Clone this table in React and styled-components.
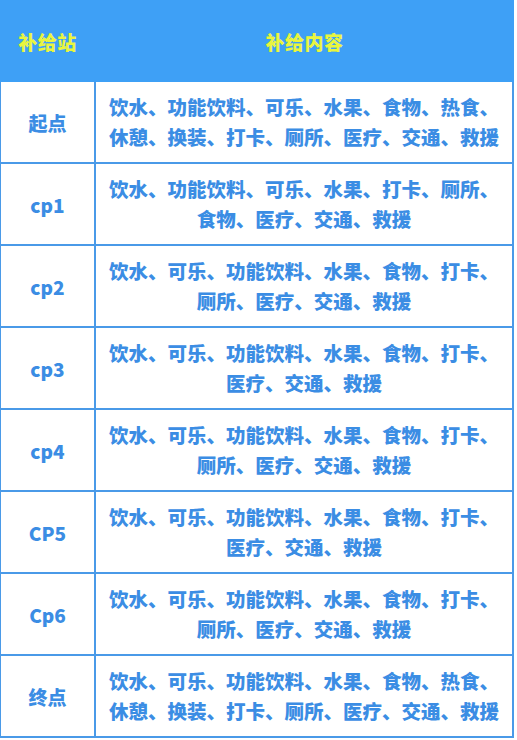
import React from 'react';
import styled, { createGlobalStyle } from 'styled-components';

const GlobalStyle = createGlobalStyle`
  html, body {
    margin: 0;
    padding: 0;
    background: #ffffff;
  }
  body {
    font-family: "Noto Sans CJK SC", "Noto Sans", sans-serif;
  }
`;

const Table = styled.div`
  width: 514px;
  display: grid;
  grid-template-columns: 93px 1fr;
  grid-auto-rows: 80px;
  gap: 2px;
  padding: 0 2px 2px 1px;
  box-sizing: border-box;
  background: #4a9ae8;
`;

const Header = styled.div`
  grid-column: 1 / -1;
  height: 82px;
  margin: 0 -2px 0 -1px;
  display: grid;
  grid-template-columns: 95px 1fr;
  align-items: center;
  background: #3ea0f6;
`;

const HeadCell = styled.div`
  text-align: center;
  color: #e9f53e;
  font-size: 19px;
  font-weight: 900;
  letter-spacing: 0.5px;
`;

const LabelCell = styled.div`
  display: flex;
  align-items: center;
  justify-content: center;
  background: #ffffff;
  color: #3b8de4;
  font-family: "Noto Sans CJK SC", "DejaVu Sans", sans-serif;
  font-size: 19px;
  font-weight: 900;
`;

const ContentCell = styled.div`
  display: flex;
  flex-direction: column;
  align-items: center;
  justify-content: center;
  background: #ffffff;
  color: #3b8de4;
  font-size: 19.5px;
  font-weight: 900;
  line-height: 30px;
  white-space: nowrap;
`;

const rows = [
  { name: '起点', lines: ['饮水、功能饮料、可乐、水果、食物、热食、', '休憩、换装、打卡、厕所、医疗、交通、救援'] },
  { name: 'cp1', lines: ['饮水、功能饮料、可乐、水果、打卡、厕所、', '食物、医疗、交通、救援'] },
  { name: 'cp2', lines: ['饮水、可乐、功能饮料、水果、食物、打卡、', '厕所、医疗、交通、救援'] },
  { name: 'cp3', lines: ['饮水、可乐、功能饮料、水果、食物、打卡、', '医疗、交通、救援'] },
  { name: 'cp4', lines: ['饮水、可乐、功能饮料、水果、食物、打卡、', '厕所、医疗、交通、救援'] },
  { name: 'CP5', lines: ['饮水、可乐、功能饮料、水果、食物、打卡、', '医疗、交通、救援'] },
  { name: 'Cp6', lines: ['饮水、可乐、功能饮料、水果、食物、打卡、', '厕所、医疗、交通、救援'] },
  { name: '终点', lines: ['饮水、可乐、功能饮料、水果、食物、热食、', '休憩、换装、打卡、厕所、医疗、交通、救援'] },
];

const App = () => (
  <>
    <GlobalStyle />
    <Table>
      <Header>
        <HeadCell>补给站</HeadCell>
        <HeadCell>补给内容</HeadCell>
      </Header>
      {rows.map((row) => (
        <React.Fragment key={row.name}>
          <LabelCell>{row.name}</LabelCell>
          <ContentCell>
            {row.lines.map((line, i) => (
              <span key={i}>{line}</span>
            ))}
          </ContentCell>
        </React.Fragment>
      ))}
    </Table>
  </>
);

export default App;
